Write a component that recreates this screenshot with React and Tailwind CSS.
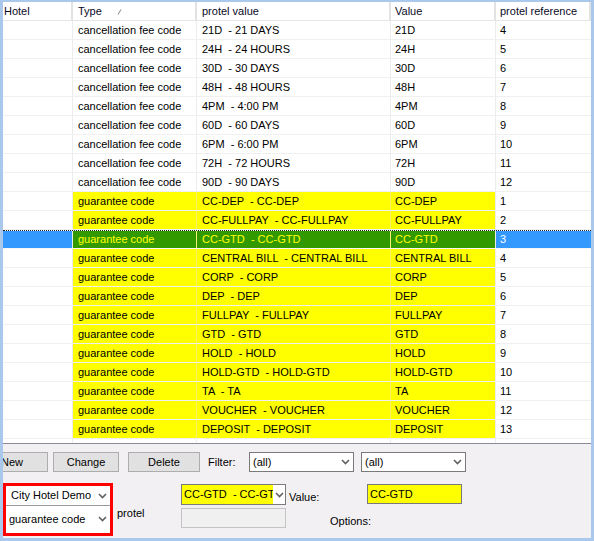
import React from 'react';

const cols = [
    { key: 'hotel', label: 'Hotel', w: 'w-[70px]', pad: 'pl-[1px]' },
    { key: 'type', label: 'Type', w: 'w-[124px]', pad: 'pl-[5px]' },
    { key: 'pv', label: 'protel value', w: 'w-[194px]', pad: 'pl-[5px]' },
    { key: 'val', label: 'Value', w: 'w-[105px]', pad: 'pl-[4px]' },
    { key: 'ref', label: 'protel reference', w: 'w-[95px]', pad: 'pl-[4px]' },
];

const rows = [
    ['cancellation fee code', '21D  - 21 DAYS', '21D', '4'],
    ['cancellation fee code', '24H  - 24 HOURS', '24H', '5'],
    ['cancellation fee code', '30D  - 30 DAYS', '30D', '6'],
    ['cancellation fee code', '48H  - 48 HOURS', '48H', '7'],
    ['cancellation fee code', '4PM  - 4:00 PM', '4PM', '8'],
    ['cancellation fee code', '60D  - 60 DAYS', '60D', '9'],
    ['cancellation fee code', '6PM  - 6:00 PM', '6PM', '10'],
    ['cancellation fee code', '72H  - 72 HOURS', '72H', '11'],
    ['cancellation fee code', '90D  - 90 DAYS', '90D', '12'],
    ['guarantee code', 'CC-DEP  - CC-DEP', 'CC-DEP', '1'],
    ['guarantee code', 'CC-FULLPAY  - CC-FULLPAY', 'CC-FULLPAY', '2'],
    ['guarantee code', 'CC-GTD  - CC-GTD', 'CC-GTD', '3'],
    ['guarantee code', 'CENTRAL BILL  - CENTRAL BILL', 'CENTRAL BILL', '4'],
    ['guarantee code', 'CORP  - CORP', 'CORP', '5'],
    ['guarantee code', 'DEP  - DEP', 'DEP', '6'],
    ['guarantee code', 'FULLPAY  - FULLPAY', 'FULLPAY', '7'],
    ['guarantee code', 'GTD  - GTD', 'GTD', '8'],
    ['guarantee code', 'HOLD  - HOLD', 'HOLD', '9'],
    ['guarantee code', 'HOLD-GTD  - HOLD-GTD', 'HOLD-GTD', '10'],
    ['guarantee code', 'TA  - TA', 'TA', '11'],
    ['guarantee code', 'VOUCHER  - VOUCHER', 'VOUCHER', '12'],
    ['guarantee code', 'DEPOSIT  - DEPOSIT', 'DEPOSIT', '13'],
];

const Chevron = () => (
    <svg width="9" height="6" viewBox="0 0 9 6" className="shrink-0">
        <path d="M1 1 L4.5 4.5 L8 1" fill="none" stroke="#606060" strokeWidth="1.6" />
    </svg>
);

const Select = ({ value, className = '' }) => (
    <div className={`flex items-center h-[20px] border border-[#7a7a7a] bg-white ${className}`}>
        <span className="flex-1 pl-[3px] whitespace-pre overflow-hidden">{value}</span>
        <span className="w-[16px] h-full flex items-center justify-center">
            <Chevron />
        </span>
    </div>
);

const Button = ({ children, className = '' }) => (
    <div className={`h-[20px] flex items-center justify-center border border-[#adadad] bg-[#e1e1e1] ${className}`}>
        {children}
    </div>
);

const App = () => {
    return (
        <div
            className="w-[594px] h-[541px] bg-[#a9c8ec] pl-[3px] pr-[3px] pt-[2px] pb-[3px] text-[11px] text-black overflow-hidden"
            style={{ fontFamily: '"Liberation Sans", Arial, sans-serif' }}
        >
            <div className="w-full h-full flex flex-col bg-white">
                {/* grid */}
                <div className="h-[442px] shrink-0 bg-white flex flex-col border-b border-[#8a8a98]">
                    <div className="flex h-[19px] shrink-0 border-b border-[#e6e6e6]">
                        {cols.map((c) => (
                            <div
                                key={c.key}
                                className={`${c.w} ${c.pad} flex items-center border-r-2 border-[#e2e2e2] text-[#0a0a28] relative`}
                            >
                                {c.label}
                                {c.key === 'type' && (
                                    <svg width="5" height="6" viewBox="0 0 5 6" className="absolute left-[44px] top-[7px]">
                                        <path d="M1 5.5 L4 0.5" stroke="#808080" strokeWidth="1" />
                                    </svg>
                                )}
                            </div>
                        ))}
                    </div>
                    {rows.map((r, i) => {
                        const guarantee = i >= 9;
                        const selected = i === 11;
                        const mid = selected
                            ? 'bg-[#339900] text-[#ffff00]'
                            : guarantee
                              ? 'bg-[#ffff00]'
                              : 'bg-white';
                        const side = selected ? 'bg-[#3399ff] text-white' : 'bg-white';
                        const sep = guarantee ? 'border-[#f4f46a]' : 'border-[#ececec]';
                        return (
                            <div
                                key={i}
                                className={`flex h-[19px] shrink-0 border-b border-[#f0f0f0] ${selected ? 'border-t border-t-[#222] border-dotted' : ''}`}
                            >
                                <div className={`w-[70px] border-r border-[#ececec] ${side}`} />
                                <div className={`w-[124px] pl-[5px] flex items-center border-r ${sep} ${mid}`}>
                                    {r[0]}
                                </div>
                                <div className={`w-[194px] pl-[5px] flex items-center whitespace-pre border-r ${sep} ${mid}`}>
                                    {r[1]}
                                </div>
                                <div className={`w-[105px] pl-[4px] flex items-center border-r border-[#ececec] ${mid}`}>
                                    {r[2]}
                                </div>
                                <div className={`w-[95px] pl-[4px] flex items-center ${side}`}>{r[3]}</div>
                            </div>
                        );
                    })}
                    <div className="flex flex-1">
                        <div className="w-[70px] border-r border-[#ececec]" />
                        <div className="w-[124px] border-r border-[#ececec]" />
                        <div className="w-[194px] border-r border-[#ececec]" />
                        <div className="w-[105px] border-r border-[#ececec]" />
                    </div>
                </div>

                {/* bottom panel */}
                <div className="flex-1 bg-[#f3f0f3] flex flex-col overflow-hidden">
                    <div className="flex items-center mt-[8px] h-[20px]">
                        <Button className="w-[72px] ml-[-27px] shrink-0">New</Button>
                        <Button className="w-[66px] ml-[5px] shrink-0">Change</Button>
                        <Button className="w-[72px] ml-[9px] shrink-0">Delete</Button>
                        <span className="ml-[8px] w-[41px] shrink-0">Filter:</span>
                        <Select value="(all)" className="w-[105px] shrink-0" />
                        <Select value="(all)" className="w-[105px] ml-[7px] shrink-0" />
                    </div>
                    <div className="flex mt-[11px]">
                        <div className="w-[110px] h-[53px] shrink-0 border-[3px] border-[#ff0000] bg-white flex flex-col">
                            <Select value="City Hotel Demo" className="h-[20px] border-0 border-b border-b-[#9a9a9a] pl-[2px]" />
                            <Select value="guarantee code" className="h-[24px] border-0 mt-[1px]" />
                        </div>
                        <span className="w-[68px] shrink-0 pl-[4px] mt-[22px]">protel</span>
                        <div className="flex flex-col w-[105px] shrink-0 mt-[1px]">
                            <div className="flex items-center h-[21px] border border-[#7a7a7a] bg-white">
                                <span className="w-[91px] h-full flex items-center pl-[2px] bg-[#ffff00] whitespace-pre overflow-hidden">
                                    CC-GTD  - CC-GTD
                                </span>
                                <span className="flex-1 flex justify-center">
                                    <Chevron />
                                </span>
                            </div>
                            <div className="h-[20px] mt-[3px] border border-[#c4c4c4] bg-[#f0f0f0]" />
                        </div>
                        <div className="flex flex-col ml-[3px]">
                            <div className="flex items-center h-[20px] mt-[1px]">
                                <span className="w-[78px] shrink-0 mt-[7px]">Value:</span>
                                <div className="w-[95px] h-[20px] border border-[#7a7a7a] bg-[#ffff00] pl-[2px] flex items-center">
                                    CC-GTD
                                </div>
                            </div>
                            <span className="ml-[41px] mt-[9px]">Options:</span>
                        </div>
                    </div>
                </div>
            </div>
        </div>
    );
};

export default App;
